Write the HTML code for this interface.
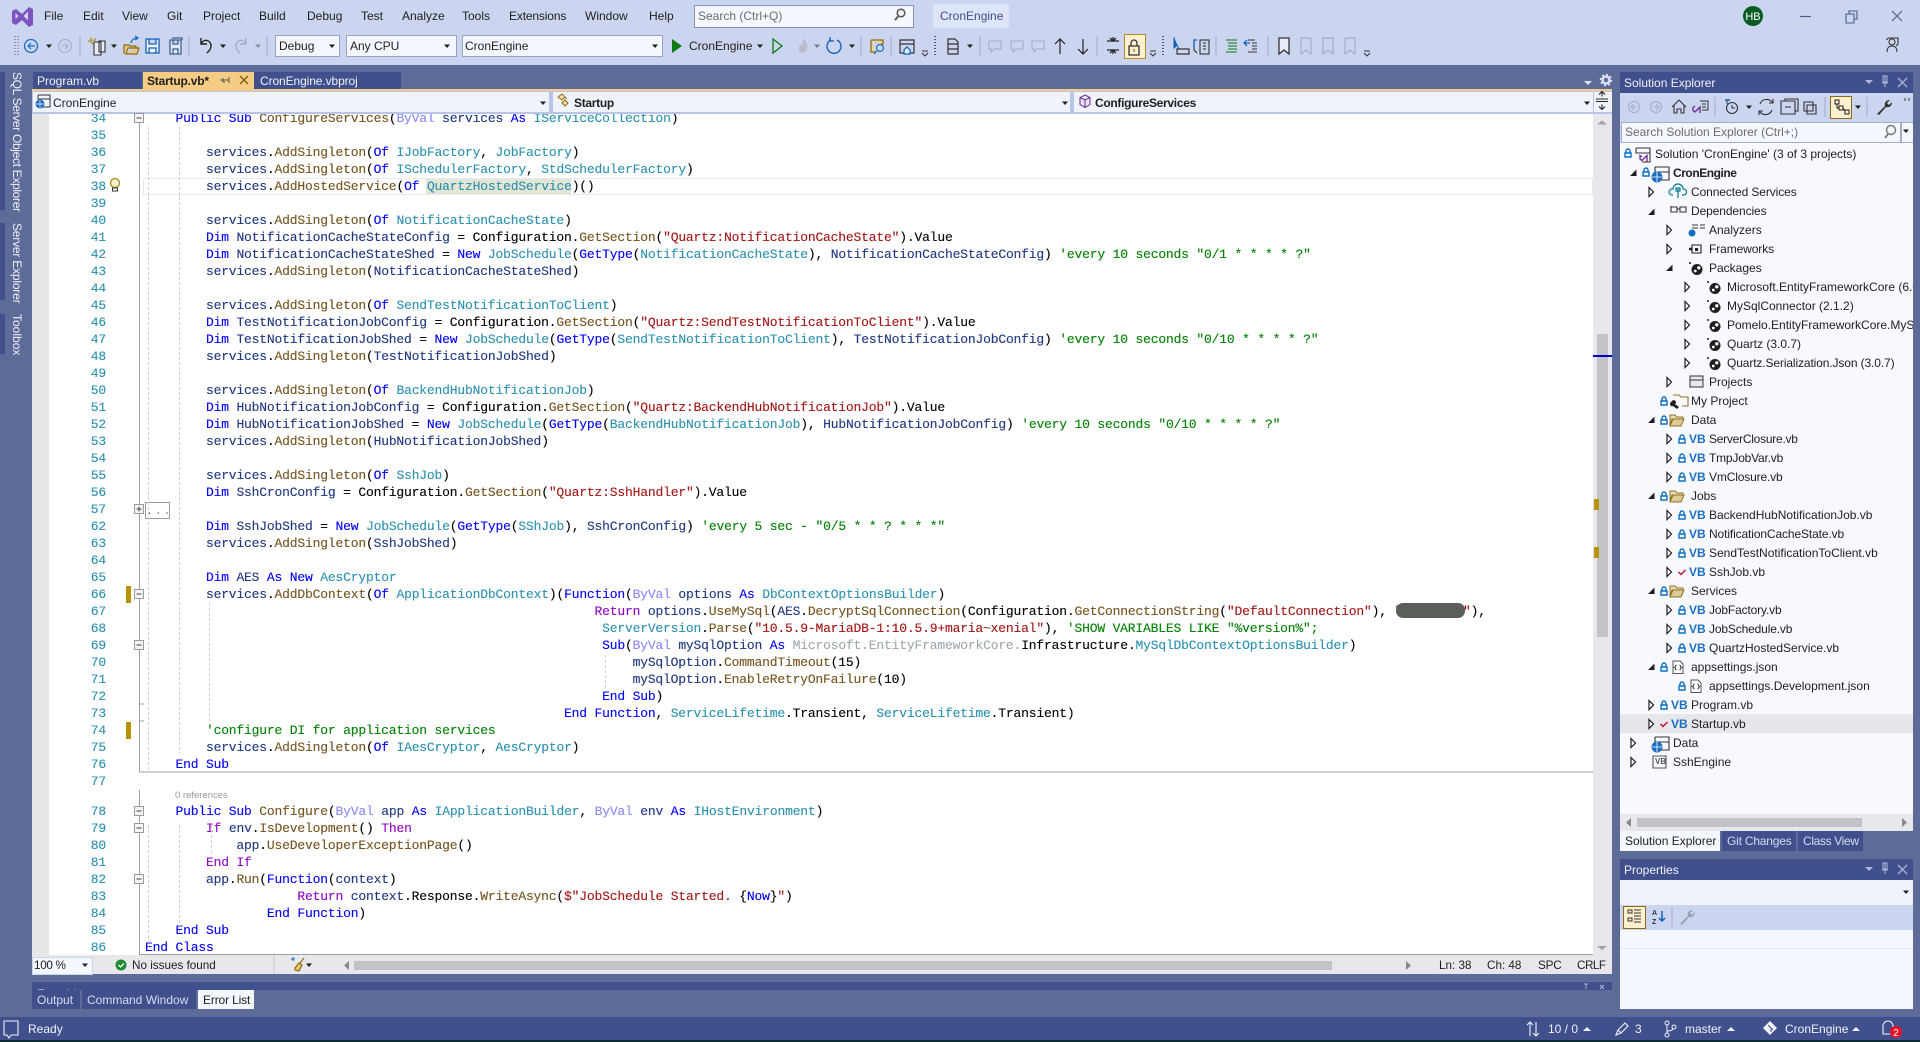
<!DOCTYPE html>
<html><head><meta charset="utf-8"><title>CronEngine</title>
<style>
html,body{margin:0;padding:0;width:1920px;height:1042px;overflow:hidden;background:#5d6b99}
body{position:relative;font:12px/16px "Liberation Sans",sans-serif;color:#1e1e1e}
.b{position:absolute}
.t{position:absolute;white-space:pre;font:12px/16px "Liberation Sans",sans-serif}
.w{color:#f0f2fa}
.vb{position:absolute;white-space:pre;font:bold 12px/16px "Liberation Sans",sans-serif;color:#1b6ec2}
pre{position:absolute;margin:0;font:13px/17px "Liberation Mono",monospace;letter-spacing:-.183px;color:#000;-webkit-text-stroke:.12px currentColor}
.k{color:#0000ff}.y{color:#2b91af}.m{color:#74531f}.s{color:#a31515}.c{color:#008000}.v{color:#1f377f}.f{color:#8a8af8}.p{color:#8f08c4}.g{color:#a0a8ad}
#ln{color:#2b91af;text-align:right}
.tr .t{color:#1e1e1e}
.es{font-size:11.7px}
</style></head><body>

<!-- top chrome -->
<div class="b" style="left:0;top:0;width:1920px;height:65px;background:#ccd5f0"></div>
<span class="t" style="left:44px;top:8px">File</span>
<span class="t" style="left:83px;top:8px">Edit</span>
<span class="t" style="left:122px;top:8px">View</span>
<span class="t" style="left:167px;top:8px">Git</span>
<span class="t" style="left:203px;top:8px">Project</span>
<span class="t" style="left:259px;top:8px">Build</span>
<span class="t" style="left:307px;top:8px">Debug</span>
<span class="t" style="left:361px;top:8px">Test</span>
<span class="t" style="left:402px;top:8px">Analyze</span>
<span class="t" style="left:462px;top:8px">Tools</span>
<span class="t" style="left:509px;top:8px;letter-spacing:-.15px">Extensions</span>
<span class="t" style="left:585px;top:8px">Window</span>
<span class="t" style="left:649px;top:8px">Help</span>
<div class="b" style="left:694px;top:5px;width:218px;height:21px;background:#f5f7fe;border:1px solid #8a93b5"></div>
<span class="t" style="left:698px;top:8px;color:#6d6d6d">Search (Ctrl+Q)</span>
<div class="b" style="left:933px;top:4px;width:76px;height:24px;background:#dfe5f8"></div>
<span class="t" style="left:940px;top:8px;color:#3f4f8c">CronEngine</span>

<!-- combos -->
<div class="b" style="left:275px;top:35px;width:63px;height:20px;background:#f5f7fe;border:1px solid #9aa3c4"></div>
<span class="t" style="left:279px;top:38px">Debug</span>
<div class="b" style="left:346px;top:35px;width:109px;height:20px;background:#f5f7fe;border:1px solid #9aa3c4"></div>
<span class="t" style="left:350px;top:38px">Any CPU</span>
<div class="b" style="left:462px;top:35px;width:199px;height:20px;background:#f5f7fe;border:1px solid #9aa3c4"></div>
<span class="t" style="left:465px;top:38px">CronEngine</span>
<span class="t" style="left:689px;top:38px">CronEngine</span>
<div class="b" style="left:1124px;top:34px;width:20px;height:23px;background:#fff0d0;border:1px solid #b58c2a"></div>

<!-- left strip -->
<div class="b" style="left:0;top:72px;width:5px;height:138px;background:#40508d"></div>
<div class="b" style="left:0;top:223px;width:5px;height:77px;background:#40508d"></div>
<div class="b" style="left:0;top:314px;width:5px;height:40px;background:#40508d"></div>
<span class="t" style="left:9px;top:72px;writing-mode:vertical-rl;color:#eef0f8;letter-spacing:-.33px">SQL Server Object Explorer</span>
<span class="t" style="left:9px;top:223px;writing-mode:vertical-rl;color:#eef0f8;letter-spacing:-.2px">Server Explorer</span>
<span class="t" style="left:9px;top:314px;writing-mode:vertical-rl;color:#eef0f8">Toolbox</span>

<!-- tabs -->
<div class="b" style="left:33px;top:72px;width:109px;height:17px;background:#40508d"></div>
<div class="b" style="left:143px;top:72px;width:111px;height:17px;background:#f5cc84"></div>
<div class="b" style="left:254px;top:72px;width:147px;height:17px;background:#40508d"></div>
<div class="b" style="left:32px;top:89px;width:1580px;height:2px;background:#f5cc84"></div>
<span class="t w" style="left:37px;top:73px">Program.vb</span>
<span class="t" style="left:147px;top:73px;font-weight:bold;letter-spacing:-.2px">Startup.vb*</span>
<span class="t w" style="left:260px;top:73px;letter-spacing:-.1px">CronEngine.vbproj</span>

<!-- navbar -->
<div class="b" style="left:32px;top:91px;width:1580px;height:23px;background:#b9c4e6"></div>
<div class="b" style="left:33px;top:92px;width:516px;height:20px;background:#f0f3fc"></div>
<div class="b" style="left:553px;top:92px;width:517px;height:20px;background:#f0f3fc"></div>
<div class="b" style="left:1074px;top:92px;width:519px;height:20px;background:#f0f3fc"></div>
<div class="b" style="left:1594px;top:92px;width:18px;height:20px;background:#f0f3fc"></div>
<span class="t" style="left:53px;top:95px">CronEngine</span>
<span class="t" style="left:574px;top:95px;font-weight:bold;letter-spacing:-.3px">Startup</span>
<span class="t" style="left:1095px;top:95px;font-weight:bold;letter-spacing:-.3px">ConfigureServices</span>

<!-- editor -->
<div class="b" style="left:32px;top:114px;width:1580px;height:841px;background:#fff;overflow:hidden" id="ed"></div>
<div class="b" style="left:32px;top:114px;width:17px;height:841px;background:#e6e7e8"></div>
<div class="b" style="left:143px;top:178px;width:1448px;height:15px;border:1px solid #e8e8f0;background:#fff"></div>
<div class="b" style="left:426px;top:179px;width:145px;height:15px;background:#e3e6d4"></div>

<div class="b" style="left:32px;top:114px;width:1561px;height:841px;overflow:hidden">
<pre id="ln" style="left:48px;top:-4px;width:26px">34
35
36
37
38
39
40
41
42
43
44
45
46
47
48
49
50
51
52
53
54
55
56
57
62
63
64
65
66
67
68
69
70
71
72
73
74
75
76
77</pre>
<pre id="ln2" style="left:48px;top:689px;width:26px;color:#2b91af;text-align:right">78
79
80
81
82
83
84
85
86</pre>
<pre style="left:113px;top:-4px">    <span class="k">Public Sub</span> <span class="m">ConfigureServices</span>(<span class="f">ByVal</span> <span class="v">services</span> <span class="k">As</span> <span class="y">IServiceCollection</span>)

        <span class="v">services</span>.<span class="m">AddSingleton</span>(<span class="k">Of</span> <span class="y">IJobFactory</span>, <span class="y">JobFactory</span>)
        <span class="v">services</span>.<span class="m">AddSingleton</span>(<span class="k">Of</span> <span class="y">ISchedulerFactory</span>, <span class="y">StdSchedulerFactory</span>)
        <span class="v">services</span>.<span class="m">AddHostedService</span>(<span class="k">Of</span> <span class="y">QuartzHostedService</span>)()

        <span class="v">services</span>.<span class="m">AddSingleton</span>(<span class="k">Of</span> <span class="y">NotificationCacheState</span>)
        <span class="k">Dim</span> <span class="v">NotificationCacheStateConfig</span> = Configuration.<span class="m">GetSection</span>(<span class="s">"Quartz:NotificationCacheState"</span>).Value
        <span class="k">Dim</span> <span class="v">NotificationCacheStateShed</span> = <span class="k">New</span> <span class="y">JobSchedule</span>(<span class="k">GetType</span>(<span class="y">NotificationCacheState</span>), <span class="v">NotificationCacheStateConfig</span>) <span class="c">'every 10 seconds "0/1 * * * * ?"</span>
        <span class="v">services</span>.<span class="m">AddSingleton</span>(<span class="v">NotificationCacheStateShed</span>)

        <span class="v">services</span>.<span class="m">AddSingleton</span>(<span class="k">Of</span> <span class="y">SendTestNotificationToClient</span>)
        <span class="k">Dim</span> <span class="v">TestNotificationJobConfig</span> = Configuration.<span class="m">GetSection</span>(<span class="s">"Quartz:SendTestNotificationToClient"</span>).Value
        <span class="k">Dim</span> <span class="v">TestNotificationJobShed</span> = <span class="k">New</span> <span class="y">JobSchedule</span>(<span class="k">GetType</span>(<span class="y">SendTestNotificationToClient</span>), <span class="v">TestNotificationJobConfig</span>) <span class="c">'every 10 seconds "0/10 * * * * ?"</span>
        <span class="v">services</span>.<span class="m">AddSingleton</span>(<span class="v">TestNotificationJobShed</span>)

        <span class="v">services</span>.<span class="m">AddSingleton</span>(<span class="k">Of</span> <span class="y">BackendHubNotificationJob</span>)
        <span class="k">Dim</span> <span class="v">HubNotificationJobConfig</span> = Configuration.<span class="m">GetSection</span>(<span class="s">"Quartz:BackendHubNotificationJob"</span>).Value
        <span class="k">Dim</span> <span class="v">HubNotificationJobShed</span> = <span class="k">New</span> <span class="y">JobSchedule</span>(<span class="k">GetType</span>(<span class="y">BackendHubNotificationJob</span>), <span class="v">HubNotificationJobConfig</span>) <span class="c">'every 10 seconds "0/10 * * * * ?"</span>
        <span class="v">services</span>.<span class="m">AddSingleton</span>(<span class="v">HubNotificationJobShed</span>)

        <span class="v">services</span>.<span class="m">AddSingleton</span>(<span class="k">Of</span> <span class="y">SshJob</span>)
        <span class="k">Dim</span> <span class="v">SshCronConfig</span> = Configuration.<span class="m">GetSection</span>(<span class="s">"Quartz:SshHandler"</span>).Value

        <span class="k">Dim</span> <span class="v">SshJobShed</span> = <span class="k">New</span> <span class="y">JobSchedule</span>(<span class="k">GetType</span>(<span class="y">SShJob</span>), <span class="v">SshCronConfig</span>) <span class="c">'every 5 sec - "0/5 * * ? * * *"</span>
        <span class="v">services</span>.<span class="m">AddSingleton</span>(<span class="v">SshJobShed</span>)

        <span class="k">Dim</span> <span class="v">AES</span> <span class="k">As New</span> <span class="y">AesCryptor</span>
        <span class="v">services</span>.<span class="m">AddDbContext</span>(<span class="k">Of</span> <span class="y">ApplicationDbContext</span>)(<span class="k">Function</span>(<span class="f">ByVal</span> <span class="v">options</span> <span class="k">As</span> <span class="y">DbContextOptionsBuilder</span>)
                                                           <span class="p">Return</span> <span class="v">options</span>.<span class="m">UseMySql</span>(<span class="v">AES</span>.<span class="m">DecryptSqlConnection</span>(Configuration.<span class="m">GetConnectionString</span>(<span class="s">"DefaultConnection"</span>), <span class="s">"XXXXXXXX"</span>),
                                                            <span class="y">ServerVersion</span>.<span class="m">Parse</span>(<span class="s">"10.5.9-MariaDB-1:10.5.9+maria~xenial"</span>), <span class="c">'SHOW VARIABLES LIKE "%version%";</span>
                                                            <span class="k">Sub</span>(<span class="f">ByVal</span> <span class="v">mySqlOption</span> <span class="k">As</span> <span class="g">Microsoft.EntityFrameworkCore.</span>Infrastructure.<span class="y">MySqlDbContextOptionsBuilder</span>)
                                                                <span class="v">mySqlOption</span>.<span class="m">CommandTimeout</span>(15)
                                                                <span class="v">mySqlOption</span>.<span class="m">EnableRetryOnFailure</span>(10)
                                                            <span class="k">End Sub</span>)
                                                       <span class="k">End Function</span>, <span class="y">ServiceLifetime</span>.Transient, <span class="y">ServiceLifetime</span>.Transient)
        <span class="c">'configure DI for application services</span>
        <span class="v">services</span>.<span class="m">AddSingleton</span>(<span class="k">Of</span> <span class="y">IAesCryptor</span>, <span class="y">AesCryptor</span>)
    <span class="k">End Sub</span>
</pre>
<pre style="left:113px;top:689px">    <span class="k">Public Sub</span> <span class="m">Configure</span>(<span class="f">ByVal</span> <span class="v">app</span> <span class="k">As</span> <span class="y">IApplicationBuilder</span>, <span class="f">ByVal</span> <span class="v">env</span> <span class="k">As</span> <span class="y">IHostEnvironment</span>)
        <span class="p">If</span> <span class="v">env</span>.<span class="m">IsDevelopment</span>() <span class="p">Then</span>
            <span class="v">app</span>.<span class="m">UseDeveloperExceptionPage</span>()
        <span class="p">End If</span>
        <span class="v">app</span>.<span class="m">Run</span>(<span class="k">Function</span>(<span class="v">context</span>)
                    <span class="p">Return</span> <span class="v">context</span>.Response.<span class="m">WriteAsync</span>(<span class="s">$"JobSchedule Started. </span>{<span class="k">Now</span>}<span class="s">"</span>)
                <span class="k">End Function</span>)
    <span class="k">End Sub</span>
<span class="k">End Class</span></pre>
</div>
<div class="b" style="left:1396px;top:603px;width:69px;height:15px;background:#5b5f5a;border-radius:7px"></div>
<span class="t" style="left:175px;top:789px;font-size:9.5px;line-height:14px;color:#9a9a9a">0 references</span>
<div class="b" style="left:145px;top:502px;width:23px;height:15px;border:1px solid #9a9a9a;background:#fff"></div>
<span class="t" style="left:146px;top:503px;color:#8a8a8a;letter-spacing:1.5px;font:12px/16px 'Liberation Mono',monospace">...</span>

<!-- gutter marks -->
<div class="b" style="left:126px;top:586px;width:5px;height:17px;background:#b89200"></div>
<div class="b" style="left:126px;top:722px;width:5px;height:17px;background:#b89200"></div>

<!-- scrollbar -->
<div class="b" style="left:1593px;top:114px;width:19px;height:841px;background:#e8e8ec"></div>
<div class="b" style="left:1597px;top:334px;width:11px;height:303px;background:#c2c3c9"></div>
<div class="b" style="left:1593px;top:355px;width:19px;height:2px;background:#0000cd"></div>
<div class="b" style="left:1594px;top:499px;width:5px;height:11px;background:#b89200"></div>
<div class="b" style="left:1594px;top:547px;width:5px;height:11px;background:#b89200"></div>

<!-- editor status -->
<div class="b" style="left:32px;top:955px;width:1580px;height:19px;background:#e8e8ec"></div>
<div class="b" style="left:32px;top:957px;width:59px;height:16px;background:#f5f7fe;border:1px solid #ccd5f0;box-sizing:content-box"></div>
<span class="t es" style="left:34px;top:958px;letter-spacing:-.3px">100 %</span>
<span class="t es" style="left:132px;top:958px">No issues found</span>
<div class="b" style="left:354px;top:961px;width:978px;height:9px;background:#c2c3c9"></div>
<span class="t es" style="left:1439px;top:958px">Ln: 38</span>
<span class="t es" style="left:1487px;top:958px">Ch: 48</span>
<span class="t es" style="left:1538px;top:958px;letter-spacing:-.2px">SPC</span>
<span class="t es" style="left:1577px;top:958px;letter-spacing:-.5px">CRLF</span>

<!-- bottom tool tabs -->
<div class="b" style="left:32px;top:982px;width:1580px;height:8px;background:#40508d;overflow:hidden"><span class="t w" style="left:5px;top:4px">Error List</span></div>
<div class="b" style="left:32px;top:990px;width:48px;height:19px;background:#40508d"></div>
<div class="b" style="left:82px;top:990px;width:114px;height:19px;background:#40508d"></div>
<div class="b" style="left:198px;top:990px;width:56px;height:19px;background:#f5f7fe"></div>
<span class="t" style="left:37px;top:992px;color:#d5dbf0">Output</span>
<span class="t" style="left:87px;top:992px;color:#d5dbf0">Command Window</span>
<span class="t" style="left:203px;top:992px;letter-spacing:-.15px">Error List</span>

<!-- status bar -->
<div class="b" style="left:0;top:1017px;width:1920px;height:23px;background:#40508d"></div>
<div class="b" style="left:0;top:1040px;width:1920px;height:2px;background:#0c2b33"></div>
<span class="t w" style="left:28px;top:1021px">Ready</span>
<span class="t w" style="left:1548px;top:1021px">10 / 0</span>
<span class="t w" style="left:1635px;top:1021px">3</span>
<span class="t w" style="left:1685px;top:1021px">master</span>
<span class="t w" style="left:1785px;top:1021px">CronEngine</span>

<!-- Solution Explorer -->
<div class="b" style="left:1620px;top:72px;width:293px;height:21px;background:#40508d"></div>
<span class="t w" style="left:1624px;top:75px">Solution Explorer</span>
<div class="b" style="left:1620px;top:93px;width:293px;height:28px;background:#ccd5f0"></div>
<div class="b" style="left:1830px;top:96px;width:20px;height:21px;background:#fff0d0;border:1px solid #8a6a14"></div>
<div class="b" style="left:1620px;top:121px;width:293px;height:23px;background:#ccd5f0"></div>
<div class="b" style="left:1621px;top:122px;width:278px;height:19px;background:#f5f7fe;border:1px solid #a4acc8"></div>
<div class="b" style="left:1901px;top:122px;width:11px;height:19px;background:#f5f7fe;border:1px solid #a4acc8"></div>
<span class="t" style="left:1625px;top:124px;color:#6d6d6d">Search Solution Explorer (Ctrl+;)</span>
<div class="b" style="left:1620px;top:143px;width:293px;height:671px;background:#f7f9ff"></div>
<div class="b" style="left:1620px;top:714px;width:293px;height:19px;background:#e6e7ed"></div>
<div class="tr">
<span class="t" style="left:1655px;top:146px">Solution 'CronEngine' (3 of 3 projects)</span>
<span class="t" style="left:1673px;top:165px;font-weight:bold;letter-spacing:-.45px">CronEngine</span>
<span class="t" style="left:1691px;top:184px;letter-spacing:-.1px">Connected Services</span>
<span class="t" style="left:1691px;top:203px;letter-spacing:-.1px">Dependencies</span>
<span class="t" style="left:1709px;top:222px">Analyzers</span>
<span class="t" style="left:1709px;top:241px;letter-spacing:-.1px">Frameworks</span>
<span class="t" style="left:1709px;top:260px">Packages</span>
<span class="t" style="left:1727px;top:279px">Microsoft.EntityFrameworkCore (6.0.0)</span>
<span class="t" style="left:1727px;top:298px">MySqlConnector (2.1.2)</span>
<span class="t" style="left:1727px;top:317px">Pomelo.EntityFrameworkCore.MySql</span>
<span class="t" style="left:1727px;top:336px">Quartz (3.0.7)</span>
<span class="t" style="left:1727px;top:355px;letter-spacing:-.12px">Quartz.Serialization.Json (3.0.7)</span>
<span class="t" style="left:1709px;top:374px">Projects</span>
<span class="t" style="left:1691px;top:393px">My Project</span>
<span class="t" style="left:1691px;top:412px">Data</span>
<span class="t" style="left:1709px;top:431px;letter-spacing:-.25px">ServerClosure.vb</span>
<span class="t" style="left:1709px;top:450px;letter-spacing:-.2px">TmpJobVar.vb</span>
<span class="t" style="left:1709px;top:469px;letter-spacing:-.15px">VmClosure.vb</span>
<span class="t" style="left:1691px;top:488px">Jobs</span>
<span class="t" style="left:1709px;top:507px">BackendHubNotificationJob.vb</span>
<span class="t" style="left:1709px;top:526px;letter-spacing:-.12px">NotificationCacheState.vb</span>
<span class="t" style="left:1709px;top:545px">SendTestNotificationToClient.vb</span>
<span class="t" style="left:1709px;top:564px">SshJob.vb</span>
<span class="t" style="left:1691px;top:583px">Services</span>
<span class="t" style="left:1709px;top:602px;letter-spacing:-.15px">JobFactory.vb</span>
<span class="t" style="left:1709px;top:621px;letter-spacing:-.15px">JobSchedule.vb</span>
<span class="t" style="left:1709px;top:640px">QuartzHostedService.vb</span>
<span class="t" style="left:1691px;top:659px">appsettings.json</span>
<span class="t" style="left:1709px;top:678px">appsettings.Development.json</span>
<span class="t" style="left:1691px;top:697px">Program.vb</span>
<span class="t" style="left:1691px;top:716px">Startup.vb</span>
<span class="t" style="left:1673px;top:735px">Data</span>
<span class="t" style="left:1673px;top:754px">SshEngine</span>
</div>
<span class="vb" style="left:1689px;top:431px">VB</span><span class="vb" style="left:1689px;top:450px">VB</span><span class="vb" style="left:1689px;top:469px">VB</span><span class="vb" style="left:1689px;top:507px">VB</span><span class="vb" style="left:1689px;top:526px">VB</span><span class="vb" style="left:1689px;top:545px">VB</span><span class="vb" style="left:1689px;top:564px">VB</span><span class="vb" style="left:1689px;top:602px">VB</span><span class="vb" style="left:1689px;top:621px">VB</span><span class="vb" style="left:1689px;top:640px">VB</span><span class="vb" style="left:1671px;top:697px">VB</span><span class="vb" style="left:1671px;top:716px">VB</span>
<span class="vb" style="left:1655px;top:754px;font-size:8px;color:#555">VB</span>
<div class="b" style="left:1913px;top:72px;width:7px;height:945px;background:#5d6b99"></div>

<!-- SE scrollbar + tabs -->
<div class="b" style="left:1620px;top:814px;width:293px;height:17px;background:#e8e8ec"></div>
<div class="b" style="left:1637px;top:818px;width:225px;height:9px;background:#c2c3c9"></div>
<div class="b" style="left:1620px;top:831px;width:100px;height:20px;background:#f5f7fe"></div>
<div class="b" style="left:1722px;top:831px;width:74px;height:20px;background:#40508d"></div>
<div class="b" style="left:1798px;top:831px;width:65px;height:20px;background:#40508d"></div>
<span class="t" style="left:1625px;top:833px">Solution Explorer</span>
<span class="t" style="left:1727px;top:833px;color:#d5dbf0;letter-spacing:-.2px">Git Changes</span>
<span class="t" style="left:1803px;top:833px;color:#d5dbf0;letter-spacing:-.35px">Class View</span>

<!-- Properties -->
<div class="b" style="left:1620px;top:859px;width:293px;height:21px;background:#40508d"></div>
<span class="t w" style="left:1624px;top:862px">Properties</span>
<div class="b" style="left:1620px;top:880px;width:293px;height:25px;background:#f0f3fc"></div>
<div class="b" style="left:1620px;top:905px;width:293px;height:25px;background:#ccd5f0"></div>
<div class="b" style="left:1620px;top:930px;width:293px;height:79px;background:#f5f7fe"></div>
<div class="b" style="left:1620px;top:948px;width:293px;height:1px;background:#e8e9f0"></div>
<div class="b" style="left:1623px;top:906px;width:21px;height:21px;background:#fff0d0;border:1px solid #8a6a14"></div>

<!-- icons overlay -->
<svg class="b" style="left:0;top:0" width="1920" height="1042" viewBox="0 0 1920 1042" fill="none">
<defs>
<path id="d" d="M-3-1.5h6l-3 3.5z" fill="#1e1e1e"/>
<path id="dw" d="M-4 2l4-4 4 4z" fill="#f0f2fa"/>
<path id="a" d="M-2-4.5 2.5 0-2 4.5z" fill="#fff" stroke="#1e1e1e" stroke-width="1.2"/>
<path id="o" d="M3.5-3.5V3H-3z" fill="#1e1e1e"/>
<path id="l" d="M-3 0h6v4h-6zM-2 0v-2a2 2 0 0 1 4 0v2" stroke="#0e70c0" stroke-width="1.4"/>
<path id="r" d="M-3.5 0l2.5 2.5 4.5-4.5" stroke="#c8102e" stroke-width="1.5"/>
<g id="p"><circle cx="1" cy="1.5" r="5.5" fill="#1e1e1e"/><circle cx="2.8" cy="-.2" r="1.7" fill="#fff"/><circle cx="-.7" cy="3" r="1.4" fill="#fff"/><circle cx="-6" cy="-5" r="1" fill="#1e1e1e"/></g>
<g id="f"><path d="M-7-5h5l2 2h6v2h-11l-2 7z" fill="#e8dcb0" stroke="#8f7224"/><path d="M-7 6l3-7h11l-3 7z" fill="#dccb96" stroke="#8f7224"/></g>
<g id="j"><path d="M-5-6h7l3 3v9.500h-10z" fill="#fff" stroke="#555"/><path d="M-1.500-2c-1.500 0-.5 2-2 2.500 1.500.5.5 2.500 2 2.500M1.500-2c1.500 0 .5 2 2 2.500-1.500.5-.5 2.500-2 2.500" stroke="#333"/></g>
<g id="h" stroke="#a4acc8"><circle r="5.500"/><path d="M-3 0h6M0-3l-3 3 3 3"/></g>
<g id="cl" stroke="#5a5a5a" stroke-width="1.100"><path d="M-6-5h12v8h-7l-3 3v-3h-2z" stroke="#a4acc8"/></g>
</defs>

<!-- VS logo -->
<path d="M12 11l4-2 6 5 7-7 4 2v16l-4 2-7-7-6 5-4-2zM15.500 13v6l3-3zM28 11.500 23.500 16 28 20.500z" fill="#7d55c0" fill-rule="evenodd"/>

<!-- search magnifier -->
<circle cx="901" cy="13" r="3.800" stroke="#555" stroke-width="1.500"/><path d="M898 16.500l-3 3.500" stroke="#555" stroke-width="2"/>

<!-- toolbar left -->
<path d="M15 36v20M18 36v20" stroke="#4d5a80" stroke-dasharray="1 2"/>
<circle cx="31" cy="46" r="6.500" stroke="#1b6ec2" stroke-width="1.300"/><path d="M35 46h-7M31 43l-3 3 3 3" stroke="#1b6ec2" stroke-width="1.200"/>
<use href="#d" x="49" y="46"/>
<circle cx="65" cy="46" r="6.500" stroke="#a4acc8"/><path d="M61 46h7M65 43l3 3-3 3" stroke="#a4acc8"/>
<path d="M80 36v20M189 36v20M267 36v20" stroke="#a4acc8"/>
<path d="M90 41l3 3M95 38v3M90 38l3 3M88 41h3" stroke="#b58c2a" stroke-width="1.300"/>
<path d="M94 42h7v13h-7zM99 41h6v11h-6z" stroke="#303030" stroke-width="1.100" fill="#e8ecfa"/>
<use href="#d" x="114" y="46"/>
<path d="M124 54v-9h5l1 1h6v2h-8l-2 6h11l2-6h-3" fill="#e0c98c" stroke="#8f6a14" stroke-width="1.200"/><path d="M131 43c1-4 4-5 6-5M135 36l3 2-3 2" stroke="#1b6ec2" stroke-width="1.300"/>
<path d="M146 39h13v14h-13zM149 39v5h7v-5M149 53v-5h7v5" stroke="#0f5fb5" stroke-width="1.300" fill="#f0f3fc"/>
<path d="M172 38h10v2M170 40h11v14h-11zM173 40v4h5v-4M173 54v-5h5v5" stroke="#3a5d8d" stroke-width="1.300" fill="#e3e8fa"/>
<path d="M201 38v6h6M201 44c3-6 10-4 10 2 0 3-2 5-4 7" stroke="#1e1e1e" stroke-width="1.400"/>
<use href="#d" x="223" y="46"/>
<path d="M246 38v6h-6M246 44c-3-6-10-4-10 2 0 3 2 5 4 7" stroke="#a4acc8" stroke-width="1.400"/>
<use href="#d" x="258" y="46" opacity=".4"/>
<use href="#d" x="332" y="46"/><use href="#d" x="447" y="46"/><use href="#d" x="655" y="46"/>
<path d="M672 39l10 7-10 7z" fill="#0e7a14"/><use href="#d" x="760" y="46"/>
<path d="M773 39l9 7-9 7z" stroke="#0e7a14" stroke-width="1.300"/>
<path d="M800 52c-3-4 0-7 2-8l2-6c1 3 5 5 3 11-1 3-5 5-7 3z" fill="#b8bccb"/><use href="#d" x="817" y="46" opacity=".5"/>
<path d="M837 40a7 7 0 1 1-6 0M830 37v4h4" stroke="#0f5fb5" stroke-width="1.300"/><use href="#d" x="852" y="46"/>
<path d="M861 36v20M891 36v20M980 36v20M1097 36v20M1216 36v20M1268 36v20" stroke="#a4acc8"/>
<path d="M871 40h12v4h-2M871 40v12h5" stroke="#8f6a14" stroke-width="1.300" fill="#e8d59a"/><circle cx="880" cy="48" r="3.500" stroke="#1b6ec2" stroke-width="1.200"/><path d="M877 51l-3 3" stroke="#1b6ec2" stroke-width="1.200"/>
<path d="M900 40h14v13h-14zM900 44h14" stroke="#333" stroke-width="1.200"/><path d="M904 54v-4l3-3 3 3v4z" fill="#e3f0fb" stroke="#0f5fb5" stroke-width="1.200"/>
<path d="M922 51h6M922 53l3 3 3-3" stroke="#333"/><path d="M935 36v20" stroke="#4d5a80" stroke-dasharray="1 2" stroke-width="2"/>
<path d="M948 39h7l3 3v12h-10zM948 44h10M948 49h10" stroke="#333" stroke-width="1.200"/><use href="#d" x="970" y="46"/>
<use href="#cl" x="995" y="46"/><use href="#cl" x="1017" y="46"/><use href="#cl" x="1038" y="46"/>
<path d="M1060 54V39M1055 44l5-5 5 5M1083 39v15M1078 49l5 5 5-5" stroke="#222" stroke-width="1.200"/>
<path d="M1107 41h12M1107 50h12M1113 37v3M1113 54v-3M1110 38l3 3 3-3M1110 53l3-3 3 3" stroke="#222" stroke-width="1.300"/>
<path d="M1129 46h10v9h-10zM1131 46v-3a3 3 0 0 1 6 0v3" stroke="#333" stroke-width="1.300"/><path d="M1134 49v3" stroke="#b58c2a" stroke-width="1.500"/>
<path d="M1150 51h6M1150 53l3 3 3-3" stroke="#333"/><path d="M1163 36v20" stroke="#4d5a80" stroke-dasharray="1 2" stroke-width="2"/>
<path d="M1174 37v11l3-3 2 4" fill="#0f5fb5" stroke="#0f5fb5"/><path d="M1177 49h12v5h-12z" stroke="#333" stroke-width="1.200"/>
<path d="M1200 40h9v14h-9zM1203 43h3M1203 46h3M1203 49h3M1197 40h-3v10l3 3" stroke="#222"/><path d="M1194 48v-8h3" stroke="#0f5fb5" stroke-width="1.300"/>
<path d="M1226 40h11M1228 43h9M1228 46h9M1228 49h9M1226 52h11" stroke="#0e7a14" stroke-width="1.100"/>
<path d="M1248 40h7M1252 43h5M1252 46h5M1252 49h5M1248 52h9" stroke="#333" stroke-width="1.100"/><path d="M1247 46l-3-3 3-3M1244 43h6" stroke="#0f5fb5" stroke-width="1.200"/>
<path d="M1279 38h10v16l-5-4-5 4z" stroke="#333" stroke-width="1.300" fill="#e8ecfa"/>
<path d="M1301 38h10v16l-5-4-5 4zM1323 38h10v16l-5-4-5 4zM1345 38h10v16l-5-4-5 4z" stroke="#a4acc8" stroke-width="1.200"/>
<path d="M1364 51h6M1364 53l3 3 3-3" stroke="#333"/>

<!-- window chrome -->
<circle cx="1753" cy="16" r="10" fill="#0b5c24"/><text x="1753" y="20" text-anchor="middle" font-family="Liberation Sans" font-size="11" fill="#fff">HB</text>
<path d="M1800 16.500h11" stroke="#4d5a88" stroke-width="1.200"/>
<path d="M1846 14h8v9h-8zM1849 14v-3h8v8h-3" stroke="#4d5a88" stroke-width="1.100"/>
<path d="M1892 11l10 10M1902 11l-10 10" stroke="#4d5a88" stroke-width="1.100"/>
<path d="M1887 52c0-4 2-6 5-6s5 2 5 6M1889 42a3 3 0 1 0 6 0 3 3 0 1 0-6 0M1887 40h0v-1l2-1h9v6l-2 2" stroke="#333" stroke-width="1.100"/>

<!-- tabs row -->
<path d="M223 80h5M223 78v4h2M225 80h4M220 80h3M229 77v6" stroke="#555"/>
<path d="M240 76l8 8M248 76l-8 8" stroke="#7a5a1a" stroke-width="1.300"/>
<path d="M1584 81h8l-4 4z" fill="#dfe3f3"/>
<circle cx="1606" cy="80" r="3.500" stroke="#dfe3f3" stroke-width="2.500"/><circle cx="1606" cy="80" r="5.500" stroke="#dfe3f3" stroke-dasharray="2 2.300" stroke-width="1.500"/>

<!-- navbar icons -->
<path d="M38 95h12v12h-9" stroke="#333"/><path d="M38 95v4h12" stroke="#333"/><circle cx="40" cy="104" r="4.500" fill="#1b6ec2"/><path d="M36 104h8M40 100v8" stroke="#fff" stroke-width=".7"/>
<use href="#d" x="543" y="103"/><use href="#d" x="1065" y="103"/><use href="#d" x="1587" y="103"/>
<path d="M558 97l4-3 3 3-3 3zM562 103l3-3 3 3-3 3zM564 96l3 3" stroke="#8f6a14" fill="#f0e0a8"/>
<path d="M1085 95l5 2.500v7l-5 3-5-3v-7zM1080 97.500l5 2.500 5-2.500M1085 100v7" stroke="#652d90" fill="#ede3f5"/>
<path d="M1596 102h12M1596 99.500h12M1602 93v4M1602 109v-4M1599 95l3-3 3 3M1599 107l3 3 3-3" stroke="#222" stroke-width="1.100" transform="translate(0 -.500)"/>
<path d="M1597 124.500l5-4 5 4z" fill="#a0a0a6"/>
<path d="M1597 946l5 4 5-4z" fill="#a0a0a6"/>

<!-- outline margin -->
<path d="M139.500 114v658M139.500 790v165" stroke="#a0a0a0"/>
<path d="M139 704h5M139 721h5M139 772h1454M140 954.500h1453" stroke="#a0a0a0"/>
<g stroke="#cfcfcf" stroke-dasharray="3 2"><path d="M148.500 127v643M179.500 127v626M209.500 603v122M605.500 655v35M148.500 825v125M179.500 825v110M211.500 825v28"/></g>
<g stroke="#9a9a9a" fill="#f4f4f4"><path d="M134.500 113.500h9v9h-9zM134.500 504.500h9v9h-9zM134.500 589.500h9v9h-9zM134.500 640.500h9v9h-9zM134.500 806.500h9v9h-9zM134.500 823.500h9v9h-9zM134.500 874.500h9v9h-9z"/></g>
<path d="M136.500 118h5M136.500 509h5M139 506.500v5M136.500 594h5M136.500 645h5M136.500 811h5M136.500 828h5M136.500 879h5" stroke="#444"/>
<circle cx="115" cy="183" r="4.500" stroke="#a08a20" stroke-width="1.300" fill="#f6efc8"/><path d="M112.500 188h5v3h-5z" stroke="#333"/>
<!-- editor status icons -->
<use href="#d" x="85" y="965"/>
<circle cx="121" cy="965" r="5.500" fill="#1e8a32"/><path d="M118.500 965l2 2 3.500-3.500" stroke="#fff" stroke-width="1.300"/>
<path d="M274 955v19" stroke="#c8c8ce"/>
<path d="M295 968l4-5 3 2-3 6-4-1zM300 963l4-5" stroke="#8f6a14" fill="#e6c86a" stroke-width="1.200"/><path d="M291 959h4M293 957v4" stroke="#1b6ec2"/>
<use href="#d" x="309" y="965"/>
<path d="M349 961l-5 4.500 5 4.500z" fill="#888"/><path d="M1406 961l5 4.500-5 4.500z" fill="#888"/>
<path d="M1586 984v5M1584 984h4" stroke="#aeb7d8"/><path d="M1600 985l4 4M1604 985l-4 4" stroke="#aeb7d8"/>

<!-- status icons -->
<path d="M4 1021h14v14H11l-2 3-2-3H4z" stroke="#eef0f8" stroke-width="1.100"/>
<path d="M1530 1036v-14M1527 1025l3-3 3 3M1536 1022v14M1533 1033l3 3 3-3" stroke="#f0f2fa" stroke-width="1.100"/>
<use href="#dw" x="1587" y="1029"/><use href="#dw" x="1731" y="1029"/><use href="#dw" x="1856" y="1029"/>
<path d="M1616 1035l2-5 7-7 3 3-7 7zM1618 1030l3 3" stroke="#f0f2fa" stroke-width="1.100"/>
<circle cx="1667" cy="1023" r="2" stroke="#f0f2fa"/><circle cx="1667" cy="1035" r="2" stroke="#f0f2fa"/><circle cx="1674" cy="1027" r="2" stroke="#f0f2fa"/><path d="M1667 1025v8M1667 1031c4 0 6-1 6-3" stroke="#f0f2fa"/>
<path d="M1770 1021l7 7-7 7-7-7z" fill="#f0f2fa"/><path d="M1768 1025l3 3v4M1771 1028l2 2" stroke="#40508d"/>
<path d="M1883 1034v-8a5 5 0 0 1 10 0v4l2 4z" stroke="#f0f2fa" stroke-width="1.100"/>
<circle cx="1896" cy="1032" r="6" fill="#e81123"/>
<text x="1896" y="1036" text-anchor="middle" font-family="Liberation Sans" font-size="10" fill="#fff">2</text>

<!-- SE header -->
<path d="M1865 80h8l-4 4z" fill="#aeb7d8"/><path d="M1885 76v7M1882 83h6M1883 76v6h4v-6zM1885 83v4" stroke="#aeb7d8"/><path d="M1898 78l9 9M1907 78l-9 9" stroke="#aeb7d8" stroke-width="1.300"/>
<path d="M1865 867h8l-4 4z" fill="#aeb7d8"/><path d="M1885 863v7M1882 870h6M1883 863v6h4v-6zM1885 870v4" stroke="#aeb7d8"/><path d="M1898 865l9 9M1907 865l-9 9" stroke="#aeb7d8" stroke-width="1.300"/>
<!-- SE toolbar -->
<use href="#h" x="1634" y="107"/><use href="#h" x="1656" y="107" transform="rotate(180 1656 107)"/>
<path d="M1672 107l7-7 7 7M1674 105v8h3v-4h4v4h3v-8" stroke="#333" stroke-width="1.100"/>
<path d="M1695 106l-2 1.500v3l2 1.500 5-5v6" stroke="#652d90" stroke-width="1.300"/><path d="M1700 101h8v9h-6M1702 104h4M1702 107h4" stroke="#333" stroke-width="1"/>
<path d="M1715 97v20M1825 97v20M1867 97v20" stroke="#a4acc8"/>
<circle cx="1732" cy="108" r="5.500" stroke="#333" stroke-width="1.100"/><path d="M1732 105v3h3M1727 100v4" stroke="#333"/><path d="M1725 100h5" stroke="#0f5fb5" stroke-width="1.500"/>
<use href="#d" x="1749" y="107"/>
<path d="M1760 104a7 7 0 0 1 12-2l1 1M1773 99v4h-4M1772 110a7 7 0 0 1-12 2l-1-1M1759 115v-4h4" stroke="#333" stroke-width="1.100"/>
<path d="M1781 101h14v13h-14zM1785 101v-2h13v12h-3M1785 107h6" stroke="#333" stroke-width="1.100"/>
<path d="M1804 102h9v9h-9zM1807 105h9v9h-9z" stroke="#333" stroke-width="1.100"/>
<path d="M1835 100h4v4h-4zM1839 106h4v4h-4zM1845 110h4v4h-4zM1837 104v4h2M1843 108l2 3" stroke="#1e1e1e" stroke-width="1"/>
<use href="#d" x="1858" y="107"/>
<path d="M1877 114l8-8c-1-3 1-6 5-6l-3 3 2 2 3-3c0 4-3 6-6 5l-7 8z" fill="#333"/>
<path d="M1905 98v3M1909 98v3" stroke="#333"/>
<circle cx="1891" cy="130" r="4.500" stroke="#777" stroke-width="1.400"/><path d="M1888 134l-3 4" stroke="#777" stroke-width="1.800"/>
<use href="#d" x="1906" y="131"/>
<use href="#d" x="1906" y="892"/>

<!-- tree -->
<use href="#l" x="1628" y="153"/>
<path d="M1636 148h14v14h-8" stroke="#333" stroke-width="1.100"/><path d="M1636 148v5h14" stroke="#333" stroke-width="1.100"/><path d="M1642 157l-2-1.500v3.500l2 1.500 5-5v6" stroke="#652d90" stroke-width="1.300"/>
<use href="#o" x="1633" y="173"/><use href="#l" x="1646" y="172"/>
<path d="M1655 167h14v13h-8M1655 167v5h14" stroke="#333" stroke-width="1.100"/><circle cx="1657" cy="177" r="5.500" fill="#1b6ec2"/><path d="M1652 177h10M1657 172v10" stroke="#fff" stroke-width=".8"/>
<use href="#a" x="1651" y="192"/>
<path d="M1673 195h-1a3 3 0 0 1 0-6h1a5 5 0 0 1 10 0 3 3 0 0 1 1 6h-2" stroke="#0b7a93" stroke-width="1.200"/><path d="M1678 188v8M1676 188h4v3h-4zM1678 198v-2" stroke="#0b7a93" stroke-width="1.200"/>
<use href="#o" x="1651" y="212"/>
<path d="M1671 207h6v5h-6zM1680 207h6v5h-6zM1671 207v-1M1677 209h3" stroke="#333" stroke-width="1.100"/>
<use href="#a" x="1669" y="230"/>
<path d="M1692 225h6M1692 228h6M1700 225h5M1700 228h5" stroke="#333"/><circle cx="1692" cy="233" r="3.500" fill="#0e70c0"/>
<use href="#a" x="1669" y="249"/>
<path d="M1689 249h3" stroke="#1e1e1e" stroke-width="2.500"/><path d="M1692 245h9v8h-9z" stroke="#1e1e1e" stroke-width="1.100" /><path d="M1695 248h3v3h-3z" fill="#1e1e1e"/>
<use href="#o" x="1669" y="268"/><use href="#p" x="1696" y="268"/>
<use href="#a" x="1687" y="287"/><use href="#p" x="1714" y="287"/>
<use href="#a" x="1687" y="306"/><use href="#p" x="1714" y="306"/>
<use href="#a" x="1687" y="325"/><use href="#p" x="1714" y="325"/>
<use href="#a" x="1687" y="344"/><use href="#p" x="1714" y="344"/>
<use href="#a" x="1687" y="363"/><use href="#p" x="1714" y="363"/>
<use href="#a" x="1669" y="382"/>
<path d="M1690 376h13v11h-13zM1690 380h13" stroke="#333" fill="#e8e9f0"/>
<use href="#l" x="1664" y="401"/>
<path d="M1673 395h6l2 2h7v9h-6" stroke="#8f7224" stroke-width="1.100"/><path d="M1673 400c3 0 4 3 2 4l4 3-2 2-4-3c-2 1-3-1-3-3z" fill="#222"/>
<use href="#o" x="1651" y="420"/><use href="#l" x="1664" y="420"/><use href="#f" x="1677" y="420"/>
<use href="#o" x="1651" y="496"/><use href="#l" x="1664" y="496"/><use href="#f" x="1677" y="496"/>
<use href="#o" x="1651" y="591"/><use href="#l" x="1664" y="591"/><use href="#f" x="1677" y="591"/>
<use href="#a" x="1669" y="439"/><use href="#l" x="1682" y="439"/>
<use href="#a" x="1669" y="458"/><use href="#l" x="1682" y="458"/>
<use href="#a" x="1669" y="477"/><use href="#l" x="1682" y="477"/>
<use href="#a" x="1669" y="515"/><use href="#l" x="1682" y="515"/>
<use href="#a" x="1669" y="534"/><use href="#l" x="1682" y="534"/>
<use href="#a" x="1669" y="553"/><use href="#l" x="1682" y="553"/>
<use href="#a" x="1669" y="572"/><use href="#r" x="1682" y="572"/>
<use href="#a" x="1669" y="610"/><use href="#l" x="1682" y="610"/>
<use href="#a" x="1669" y="629"/><use href="#l" x="1682" y="629"/>
<use href="#a" x="1669" y="648"/><use href="#l" x="1682" y="648"/>
<use href="#o" x="1651" y="667"/><use href="#l" x="1664" y="667"/><use href="#j" x="1678" y="667"/>
<use href="#l" x="1682" y="686"/><use href="#j" x="1696" y="686"/>
<use href="#a" x="1651" y="705"/><use href="#l" x="1664" y="705"/>
<use href="#a" x="1651" y="724"/><use href="#r" x="1664" y="724"/>
<use href="#a" x="1633" y="743"/>
<path d="M1655 737h14v13h-8M1655 737v5h14" stroke="#333" stroke-width="1.100"/><circle cx="1657" cy="747" r="5.500" fill="#1b6ec2"/><path d="M1652 747h10M1657 742v10" stroke="#fff" stroke-width=".8"/>
<use href="#a" x="1633" y="762"/>
<path d="M1653 756h13v12h-13z" stroke="#555" stroke-width="1.100"/>
<path d="M1631 818l-5 4.500 5 4.500z" fill="#888"/><path d="M1902 818l5 4.500-5 4.500z" fill="#888"/>
<!-- properties toolbar -->
<path d="M1628 910h4v3h-4zM1628 918h4v3h-4zM1634 910h7M1634 913h7M1634 916h7M1634 919h7M1634 922h7" stroke="#333"/>
<text x="1652" y="915" font-family="Liberation Sans" font-size="7" font-weight="bold" fill="#333">A</text><text x="1652" y="924" font-family="Liberation Sans" font-size="7" font-weight="bold" fill="#333">Z</text>
<path d="M1662 911v10M1659 918l3 3 3-3" stroke="#0f5fb5" stroke-width="1.500"/>
<path d="M1672 907v20" stroke="#a4acc8"/>
<path d="M1680 924l8-8c-1-3 1-6 5-6l-3 3 2 2 3-3c0 4-3 6-6 5l-7 8z" fill="#9aa0b0"/>
</svg>
</body></html>
